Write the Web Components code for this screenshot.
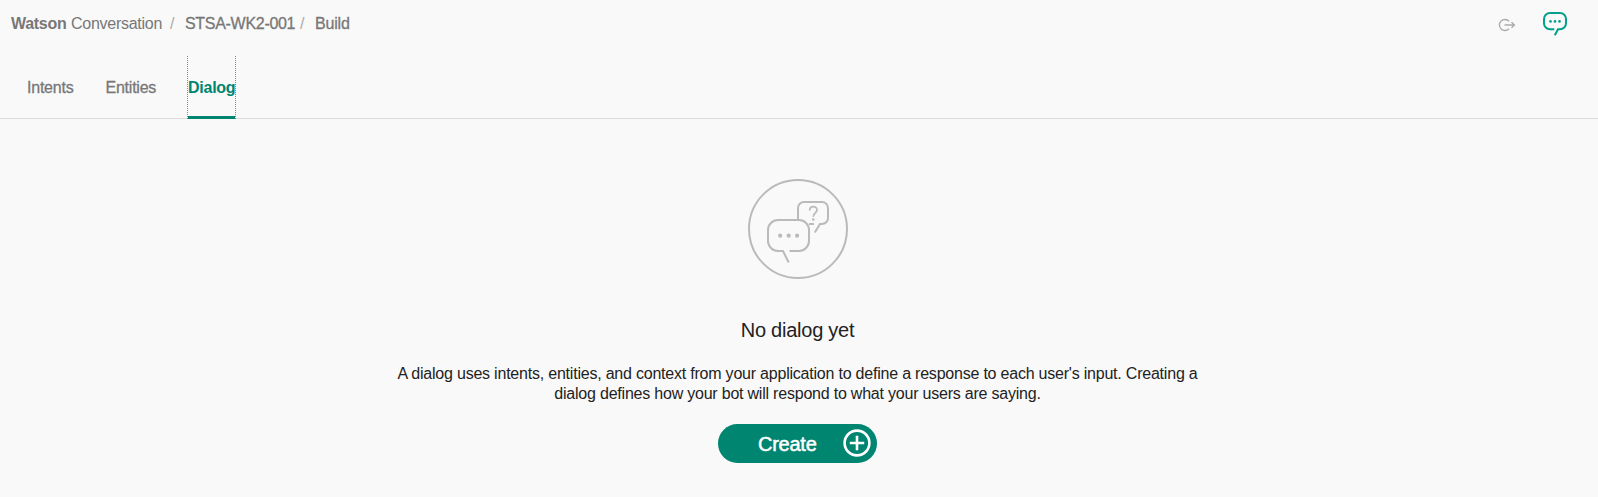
<!DOCTYPE html>
<html lang="en"><head><meta charset="utf-8"><title>Watson Conversation</title>
<style>html,body{margin:0;height:100%;background:#f9f9f9}body{font-family:"Liberation Sans",Arial,sans-serif;overflow:hidden}</style></head>
<body>
<dialog-page></dialog-page>
<script>
const define=(name,html)=>customElements.define(name,class extends HTMLElement{
  constructor(){super();this.attachShadow({mode:'open'}).innerHTML=html;}
});
define('crumb-bar',`<style>
:host{display:flex;height:56px;box-sizing:border-box;padding:15px 29px 0 11px;font-size:16px;line-height:18px;color:#777;white-space:nowrap;justify-content:space-between}
nav{display:flex}span{display:block}
.w{font-weight:700;width:60px;letter-spacing:-.3px}.c{width:99px;letter-spacing:-.27px}
.s{color:#aaa;width:15px}.n{width:115px;letter-spacing:-.3px;-webkit-text-stroke:.3px}.b{letter-spacing:-.2px;-webkit-text-stroke:.3px}
svg{display:block}.icons{display:flex;margin-top:-15px}
</style><nav><span class="w">Watson</span><span class="c">Conversation</span><span class="s">/</span><span class="n">STSA-WK2-001</span><span class="s">/</span><span class="b">Build</span></nav>
<div class="icons"><svg width="89" height="50" viewBox="1480 0 89 50" fill="none">
<path d="M1509 21.3A5.5 5.5 0 1 0 1509 28.7M1504.5 25H1514M1511.5 22.2l3 2.8-3 2.8" stroke="#aaa" stroke-width="1.3"/>
<g stroke="#00a08c" stroke-width="2"><path d="M1554.3 29.3H1550a6 6 0 0 1-6-6V19a6 6 0 0 1 6-6H1560a6 6 0 0 1 6 6V23.300a6 6 0 0 1-6 6H1558L1554.800 35.300"/></g>
<g fill="#00a08c"><circle cx="1550.500" cy="21.400" r="1.300"/><circle cx="1555" cy="21.400" r="1.300"/><circle cx="1559.500" cy="21.400" r="1.300"/></g></svg></div>`);
define('nav-tab',`<style>
:host{display:block;height:63px;box-sizing:border-box;padding-top:23px;font-size:16px;line-height:18px;color:#777;letter-spacing:-.23px;-webkit-text-stroke:.3px;white-space:nowrap}
:host([active]){color:#008571;font-weight:700;-webkit-text-stroke:0;width:47px;border-bottom:3px solid #008571;position:relative;letter-spacing:-.25px}
i{display:none}:host([active]) i{display:block;position:absolute;top:0;bottom:-3px;left:-1px;right:-1px;border:1px dotted #888;border-width:0 1px}
</style><slot></slot><i></i>`);
define('tab-strip',`<style>:host{display:flex;height:63px;box-sizing:border-box;border-bottom:1px solid #dadada;padding-left:27px}
::slotted(:nth-child(1)){width:78.500px}::slotted(:nth-child(2)){width:82.500px}</style><slot></slot>`);
define('chat-emblem',`<style>:host{display:block;height:100px;width:100px}svg{display:block}</style>
<svg width="100" height="100" viewBox="748 179 100 100" fill="none" stroke="#bababa" stroke-width="2"><circle cx="798" cy="229" r="49"/>
<path d="M789.5 251H799a10 10 0 0 0 10-10V230a10 10 0 0 0-10-10H778a10 10 0 0 0-10 10V241a10 10 0 0 0 10 10H783L788.700 262.500"/>
<path d="M798 219V208a6 6 0 0 1 6-6H822a6 6 0 0 1 6 6V218a6 6 0 0 1-6 6H820L814.800 232.500M809 224H814"/>
<path d="M809.700 210.500C809.700 205.400 817 205.300 817 210C817 212.900 813.300 212.900 813.300 216.700" stroke-width="1.800"/>
<g fill="#bababa" stroke="none"><circle cx="813.300" cy="219.500" r="1.300"/><circle cx="780.200" cy="235.700" r="2.100"/><circle cx="788.700" cy="235.700" r="2.100"/><circle cx="797.100" cy="235.700" r="2.100"/></g></svg>`);
define('create-button',`<style>:host{display:block}button{display:flex;align-items:center;width:159px;height:39px;border:0;border-radius:20px;background:#008571;color:#fff;padding:0 6.500px 0 40px;font:20px/24px "Liberation Sans",Arial,sans-serif;letter-spacing:-.25px;-webkit-text-stroke:.5px;justify-content:space-between}svg{display:block;margin-top:-2px}</style>
<button><slot></slot><svg width="28" height="28" fill="none" stroke="#fff" stroke-width="2.600"><circle cx="14" cy="14" r="12.400"/><path d="M14 6.800V21.200M6.800 14H21.200"/></svg></button>`);
define('empty-state',`<style>:host{display:flex;flex-direction:column;align-items:center;padding-top:60px;width:1595px;color:#222}
h1{font-weight:400;font-size:20px;line-height:24px;letter-spacing:-.25px;margin:39px 0 0}
p{font-size:16px;line-height:20px;letter-spacing:-.215px;text-align:center;margin:22px 0 20px;white-space:nowrap}</style>
<chat-emblem></chat-emblem><h1>No dialog yet</h1><p>A dialog uses intents, entities, and context from your application to define a response to each user's input. Creating a<br>dialog defines how your bot will respond to what your users are saying.</p><create-button>Create</create-button>`);
define('dialog-page',`<style>:host{display:block}</style><crumb-bar></crumb-bar><tab-strip><nav-tab>Intents</nav-tab><nav-tab>Entities</nav-tab><nav-tab active>Dialog</nav-tab></tab-strip><empty-state></empty-state>`);
</script></body></html>
